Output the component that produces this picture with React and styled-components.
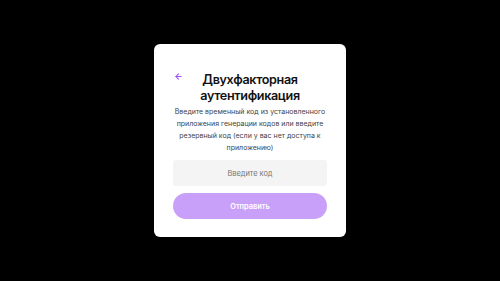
import React from 'react'
import styled, { createGlobalStyle } from 'styled-components'

const GlobalStyle = createGlobalStyle`
  html, body {
    margin: 0;
    padding: 0;
    background: #000;
  }
  body {
    font-family: Inter, 'Noto Sans', sans-serif;
  }
`

const Screen = styled.div`
  width: 500px;
  height: 281px;
  display: flex;
  align-items: center;
  justify-content: center;
  background: #000;
`

const Card = styled.div`
  width: 192px;
  box-sizing: border-box;
  background: #fff;
  border-radius: 6px;
  padding: 28px 19px 18px;
  display: flex;
  flex-direction: column;
`

const Header = styled.div`
  position: relative;
  display: flex;
  justify-content: center;
`

const BackButton = styled.button`
  position: absolute;
  left: 1px;
  top: 0;
  border: 0;
  background: none;
  padding: 0;
  color: #a04ef6;
  display: flex;
  cursor: pointer;
`

const Title = styled.h1`
  margin: 0;
  font-size: 12.6px;
  line-height: 16px;
  font-weight: 600;
  letter-spacing: -0.35px;
  color: #111;
  text-align: center;
`

const Description = styled.p`
  margin: 2px -2px 0;
  font-size: 7px;
  line-height: 12px;
  color: #3f3f3f;
  text-align: center;
`

const CodeInput = styled.input`
  margin-top: 6px;
  height: 26px;
  box-sizing: border-box;
  border: 0;
  border-radius: 3px;
  background: #f4f4f4;
  font-family: inherit;
  font-size: 7.4px;
  text-align: center;
  color: #111;
  outline: none;
  &::placeholder {
    color: #777;
  }
`

const Submit = styled.button`
  margin-top: 7px;
  height: 26px;
  border: 0;
  border-radius: 13px;
  background: #c9a0f9;
  color: #fff;
  font-family: inherit;
  font-size: 7.4px;
  font-weight: 600;
  cursor: pointer;
`

export default function App() {
  return (
    <>
      <GlobalStyle />
      <Screen>
        <Card>
          <Header>
            <BackButton aria-label="Назад">
              <svg width="9" height="9" viewBox="0 0 24 24" fill="none" stroke="currentColor" strokeWidth="2.8" strokeLinecap="round" strokeLinejoin="round">
                <path d="M19 12H5" />
                <path d="M12 19l-7-7 7-7" />
              </svg>
            </BackButton>
            <Title>
              Двухфакторная
              <br />
              аутентификация
            </Title>
          </Header>
          <Description>
            Введите временный код из установленного приложения генерации кодов или введите резервный код (если у вас нет доступа к приложению)
          </Description>
          <CodeInput placeholder="Введите код" />
          <Submit>Отправить</Submit>
        </Card>
      </Screen>
    </>
  )
}
